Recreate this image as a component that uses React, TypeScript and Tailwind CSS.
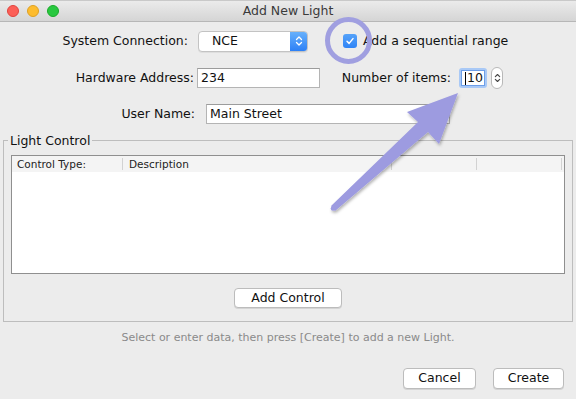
import React from "react";

function Chevrons({ color = "#fff", w = 8, h = 12 }: { color?: string; w?: number; h?: number }) {
  return (
    <svg width={w} height={h} viewBox="0 0 8 12" fill="none">
      <path d="M1.5 4.5 L4 2 L6.5 4.5" stroke={color} strokeWidth="1.3" strokeLinecap="round" strokeLinejoin="round" />
      <path d="M1.5 7.5 L4 10 L6.5 7.5" stroke={color} strokeWidth="1.3" strokeLinecap="round" strokeLinejoin="round" />
    </svg>
  );
}

function Btn({ label, w }: { label: string; w: string }) {
  return (
    <div
      className={`${w} h-[21px] flex items-center justify-center bg-white border border-[#bcbcbc] rounded-[4px] shadow-[0_1px_0_rgba(0,0,0,0.10)] text-[12.5px] text-[#111]`}
    >
      {label}
    </div>
  );
}

export default function App() {
  return (
    <div className="relative w-[576px] h-[399px] overflow-hidden bg-[#ececec] text-[#111] text-[12.5px] font-['DejaVu_Sans',sans-serif]">
      {/* title bar */}
      <div className="h-[22px] grid grid-cols-[1fr_auto_1fr] items-center bg-linear-to-b from-[#ebebeb] to-[#d5d5d5] border-b border-[#b7b7b7] border-t border-t-[#c9c9c9]">
        <div className="flex items-center gap-[8px] pl-[7px]">
          <div className="w-[12px] h-[12px] rounded-full bg-[#fc5f57] border border-[#e0443e]" />
          <div className="w-[12px] h-[12px] rounded-full bg-[#fdbc2e] border border-[#dea123]" />
          <div className="w-[12px] h-[12px] rounded-full bg-[#29c840] border border-[#1aab29]" />
        </div>
        <div className="text-[12.5px] text-[#3a3a3a] leading-none">Add New Light</div>
        <div />
      </div>

      {/* form */}
      <div className="pt-[8px]">
        <div className="flex items-center h-[22px]">
          <div className="w-[188px] text-right leading-none">System Connection:</div>
          <div className="ml-[10px] w-[110px] h-[21px] flex items-stretch bg-white border border-[#c3c3c3] rounded-[4px] shadow-[0_1px_0_rgba(0,0,0,0.06)] overflow-hidden">
            <div className="flex-1 flex items-center pl-[13px] leading-none">NCE</div>
            <div className="w-[17px] flex items-center justify-center bg-linear-to-b from-[#67b0fb] to-[#2c80f6]">
              <Chevrons />
            </div>
          </div>
          <div className="ml-[35px] w-[14px] h-[14px] rounded-[3px] bg-linear-to-b from-[#55a2f9] to-[#2f84f6] flex items-center justify-center">
            <svg width="10" height="10" viewBox="0 0 10 10" fill="none">
              <path d="M2 5.3 L4.1 7.4 L8 2.6" stroke="#fff" strokeWidth="1.5" strokeLinecap="round" strokeLinejoin="round" />
            </svg>
          </div>
          <div className="ml-[6px] leading-none">Add a sequential range</div>
        </div>

        <div className="flex items-center h-[20px] mt-[16px]">
          <div className="w-[194px] text-right leading-none">Hardware Address:</div>
          <div className="ml-[3px] w-[123px] h-[20px] flex items-center bg-white border border-[#b4b4b4] border-t-[#9c9c9c] pl-[3px] leading-none">234</div>
          <div className="w-[131px] text-right leading-none">Number of items:</div>
          <div className="ml-[8px] w-[28px] h-[20px] p-[2px] bg-[#a9c9f6] rounded-[3px]">
            <div className="w-full h-full bg-white border border-[#6e9fe8] flex items-center justify-end pr-[1px] leading-none">
              <span className="w-px h-[13px] bg-black mr-[1px]" />
              <span>10</span>
            </div>
          </div>
          <div className="ml-[4px] w-[12px] h-[22px] bg-white border border-[#b8b8b8] rounded-[6px] flex items-center justify-center">
            <Chevrons color="#444" w={7} h={12} />
          </div>
        </div>

        <div className="flex items-center h-[20px] mt-[16px]">
          <div className="w-[195px] text-right leading-none">User Name:</div>
          <div className="ml-[11px] w-[244px] h-[20px] flex items-center bg-white border border-[#b4b4b4] border-t-[#9c9c9c] pl-[3px] leading-none">Main Street</div>
        </div>
      </div>

      {/* group */}
      <fieldset className="mt-[9px] mx-[3px] p-0 border border-[#bdbdbd]">
        <legend className="ml-[4px] px-[2px] leading-[15px] text-[12.5px]">Light Control</legend>
        <div className="pt-[7px] px-[7px] pb-[13px]">
          <div className="w-[554px] h-[119px] bg-white border border-[#8f8f8f]">
            <div className="h-[16px] bg-[#f4f4f4] flex items-center text-[10.5px] text-[#222]">
              <div className="w-[110px] pl-[5px] leading-none">Control Type:</div>
              <div className="w-px h-[12px] bg-[#d2d2d2]" />
              <div className="w-[268px] pl-[6px] leading-none">Description</div>
              <div className="w-px h-[12px] bg-[#d2d2d2]" />
              <div className="w-[84px]" />
              <div className="w-px h-[12px] bg-[#d2d2d2]" />
              <div className="w-[84px]" />
              <div className="w-px h-[12px] bg-[#d2d2d2]" />
            </div>
          </div>
          <div className="mt-[14px] flex justify-center">
            <div className="w-[108px] h-[20px] flex items-center justify-center bg-white border border-[#bcbcbc] rounded-[4px] shadow-[0_1px_0_rgba(0,0,0,0.10)]">
              Add Control
            </div>
          </div>
        </div>
      </fieldset>

      <div className="mt-[9px] text-center text-[11px] leading-[14px] text-[#8a8a8a]">
        Select or enter data, then press [Create] to add a new Light.
      </div>

      <div className="mt-[23px] flex justify-end pr-[12px] gap-[17px]">
        <Btn label="Cancel" w="w-[73px]" />
        <Btn label="Create" w="w-[71px]" />
      </div>

      {/* annotation overlay */}
      <svg className="absolute inset-0 pointer-events-none" width="576" height="399" viewBox="0 0 576 399">
        <defs>
          <filter id="sh" x="-20%" y="-20%" width="140%" height="140%">
            <feDropShadow dx="1" dy="2" stdDeviation="1.5" floodColor="#000" floodOpacity="0.3" />
          </filter>
        </defs>
        <circle cx="348.5" cy="40.5" r="21" fill="none" stroke="#a09fe0" strokeWidth="5" />
        <g filter="url(#sh)">
          <polygon points="458,93 407,112 418,122 331,206 335,211 428,132 439,144" fill="#9d9be0" />
          <circle cx="333" cy="208.5" r="2.3" fill="#9d9be0" />
        </g>
      </svg>
    </div>
  );
}
